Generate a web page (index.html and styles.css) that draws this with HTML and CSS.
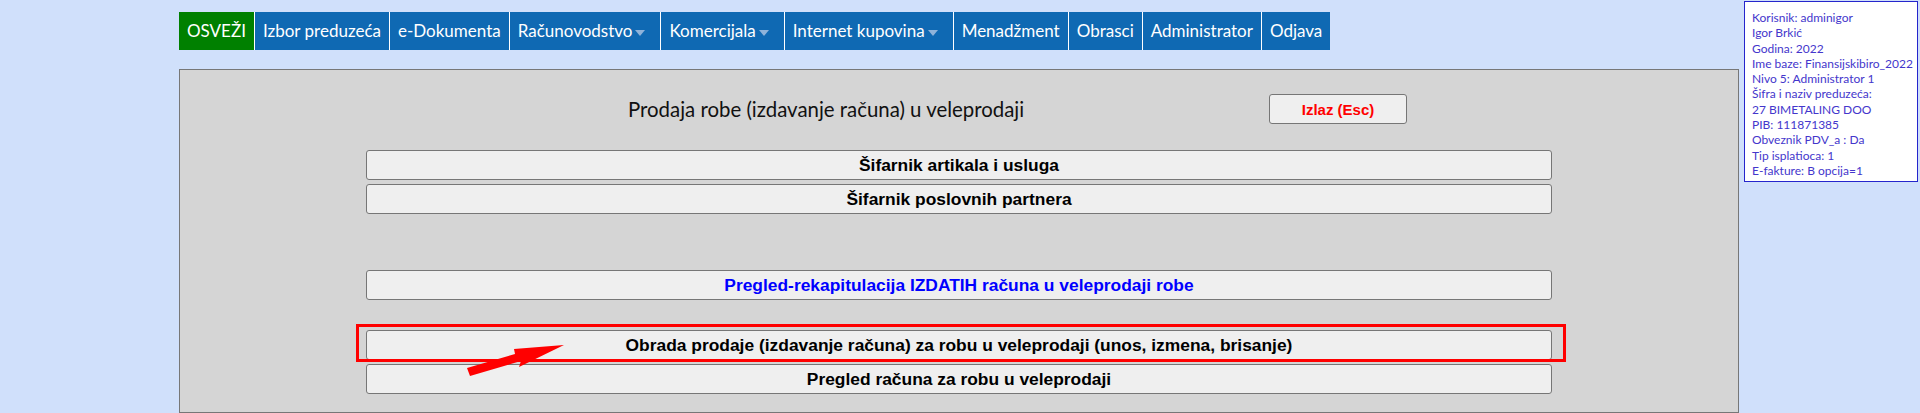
FILE: index.html
```html
<!DOCTYPE html>
<html>
<head>
    <title>Prodaja robe u veleprodaji</title>
    <link rel="stylesheet" href="styles.css">
</head>
<body>
    <div class="page">
        <div class="main">
            <ul class="menu">
                <li class="refresh">OSVEŽI</li>
                <li>Izbor preduzeća</li>
                <li>e-Dokumenta</li>
                <li>Računovodstvo<span class="caret"></span></li>
                <li>Komercijala<span class="caret"></span></li>
                <li>Internet kupovina<span class="caret"></span></li>
                <li>Menadžment</li>
                <li>Obrasci</li>
                <li>Administrator</li>
                <li>Odjava</li>
            </ul>

            <div class="panel">
                <div class="panel-head">
                    <div class="title">Prodaja robe (izdavanje računa) u veleprodaji</div>
                    <button class="exit">Izlaz (Esc)</button>
                </div>

                <div class="actions">
                    <button class="wide">Šifarnik artikala i usluga</button>
                    <button class="wide">Šifarnik poslovnih partnera</button>

                    <button class="wide blue spaced">Pregled-rekapitulacija IZDATIH računa u veleprodaji robe</button>

                    <div class="marked">
                        <button class="wide">Obrada prodaje (izdavanje računa) za robu u veleprodaji (unos, izmena, brisanje)</button>
                        <span class="highlight"></span>
                        <svg class="arrow" width="110" height="40" viewBox="0 0 110 40">
                            <polygon points="0,25 48,11 47,6 97,2 52,24 54,18 3,33" fill="#ff0000"/>
                        </svg>
                    </div>
                    <button class="wide">Pregled računa za robu u veleprodaji</button>
                </div>
            </div>
        </div>

        <div class="info">
            Korisnik: adminigor<br>
            Igor Brkić<br>
            Godina: 2022<br>
            Ime baze: Finansijskibiro_2022<br>
            Nivo 5: Administrator 1<br>
            Šifra i naziv preduzeća:<br>
            27 BIMETALING DOO<br>
            PIB: 111871385<br>
            Obveznik PDV_a : Da<br>
            Tip isplatioca: 1<br>
            E-fakture: B opcija=1
        </div>
    </div>
</body>
</html>
```

FILE: styles.css
```css
body {
    margin: 0;
    background-color: #d0e0fb;
    font-family: Lato, "Open Sans", sans-serif;
    height: 413px;
    overflow: hidden;
}
.page {
    display: flex;
    align-items: flex-start;
    padding-left: 179px;
}
.main {
    width: 1560px;
    margin-right: 5px;
}

/* top menu */
.menu {
    list-style: none;
    margin: 12px 0 0 0;
    padding: 0;
    display: flex;
    height: 38px;
}
.menu li {
    background-color: #0f69b3;
    color: #fff;
    font-size: 17px;
    line-height: 38px;
    padding: 0 8px;
    border-left: 1px solid #fff;
    white-space: nowrap;
    display: flex;
    align-items: center;
}
.menu li:first-child {
    border-left: none;
}
.menu li.refresh {
    background-color: #008000;
}
.caret {
    display: inline-block;
    width: 0;
    height: 0;
    margin: 4px 7px 0 3px;
    border-left: 5px solid transparent;
    border-right: 5px solid transparent;
    border-top: 6px solid #8fb3da;
}

/* panel */
.panel {
    margin-top: 19px;
    background-color: #d5d5d5;
    border: 1px solid #777;
    height: 344px;
    box-sizing: border-box;
}
.panel-head {
    display: flex;
    align-items: center;
    padding: 24px 0 0 448px;
}
.title {
    width: 641px;
    font-size: 20.4px;
    color: #111;
}
button {
    font-family: "Liberation Sans", Arial, sans-serif;
    font-weight: bold;
    background-color: #efefef;
    border: 1px solid #767676;
    border-radius: 3px;
    cursor: pointer;
}
.exit {
    width: 138px;
    height: 30px;
    font-size: 15px;
    color: #ff0000;
}
.actions {
    padding: 26px 186px 0 186px;
    display: flex;
    flex-direction: column;
    gap: 4px;
}
.wide {
    width: 100%;
    height: 30px;
    font-size: 17.4px;
    color: #000;
}
.wide.blue {
    color: #0000ff;
}
.spaced {
    margin-top: 52px;
    margin-bottom: 26px;
}
.marked {
    position: relative;
    display: flex;
}
.highlight {
    position: absolute;
    left: -10px;
    right: -14px;
    top: -6px;
    bottom: -2px;
    border: 3px solid #ff0000;
    pointer-events: none;
}
.arrow {
    position: absolute;
    left: 101px;
    top: 13px;
}

/* user info */
.info {
    margin-top: 1px;
    width: 174px;
    height: 181px;
    box-sizing: border-box;
    background-color: #fff;
    border: 1px solid #2525cc;
    padding: 8px 7px;
    color: #4436cc;
    font-size: 12px;
    line-height: 15.3px;
    white-space: nowrap;
    overflow: hidden;
}
```
